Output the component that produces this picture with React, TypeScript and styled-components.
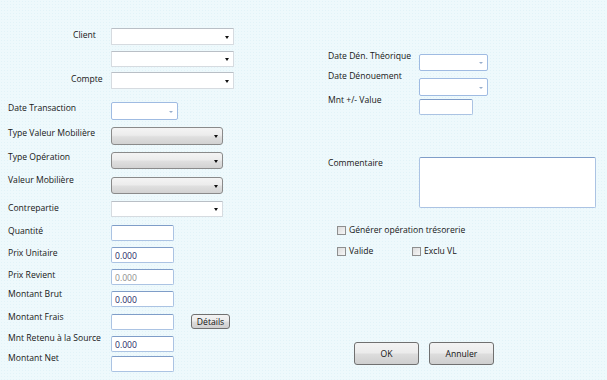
import styled, { createGlobalStyle } from 'styled-components';

const GlobalStyle = createGlobalStyle`
  html, body {
    margin: 0;
    padding: 0;
  }
  body {
    width: 607px;
    height: 380px;
    overflow: hidden;
    font-family: 'Open Sans', 'Liberation Sans', sans-serif;
    font-size: 8.6px;
    color: #161616;
    background-color: #eef9fc;
    background-image: radial-gradient(#e2f3f8 0.7px, transparent 0.8px);
    background-size: 3px 3px;
  }
`;

const Page = styled.div`
  display: flex;
  box-sizing: border-box;
  height: 380px;
  padding: 28px 0 0 8px;
`;

const LeftCol = styled.div`
  display: flex;
  flex-direction: column;
  width: 320px;
`;

const RightCol = styled.div`
  display: flex;
  flex-direction: column;
  margin-top: 26px;
`;

const Row = styled.div<{ $h: number; $lw?: number }>`
  display: grid;
  grid-template-columns: ${(p) => p.$lw ?? 103}px max-content max-content;
  justify-content: start;
  align-items: start;
  height: ${(p) => p.$h}px;
`;

const Label = styled.span<{ $dy?: number; $indent?: number }>`
  margin-top: ${(p) => p.$dy ?? 0}px;
  padding-left: ${(p) => p.$indent ?? 0}px;
  line-height: 11px;
  white-space: nowrap;
`;

const comboSkins = {
  white: `
    background: #ffffff;
    border: 1px solid #d6dbe0;
    border-top-color: #b9bfc6;
    border-radius: 1px;
  `,
  grey: `
    background: linear-gradient(#f4f4f4 0%, #ececec 45%, #dfdfdf 55%, #d2d2d2 100%);
    border: 1px solid #8a8a8a;
    border-radius: 3px;
  `,
  date: `
    background: #ffffff;
    border: 1px solid #9fbbe2;
    border-radius: 2px;
  `,
};

const Combo = styled.div<{ $w: number; $h: number; $kind: keyof typeof comboSkins }>`
  box-sizing: border-box;
  display: flex;
  align-items: center;
  justify-content: flex-end;
  width: ${(p) => p.$w}px;
  height: ${(p) => p.$h}px;
  padding-right: 4px;
  ${(p) => comboSkins[p.$kind]}
`;

const Arrow = styled.span<{ $light?: boolean }>`
  width: 0;
  height: 0;
  margin-top: 1px;
  border-left: ${(p) => (p.$light ? 2 : 2.5)}px solid transparent;
  border-right: ${(p) => (p.$light ? 2 : 2.5)}px solid transparent;
  border-top: ${(p) => (p.$light ? 2 : 3)}px solid ${(p) => (p.$light ? '#97aecb' : '#111')};
`;

const Field = styled.div<{ $w: number; $muted?: boolean }>`
  box-sizing: border-box;
  width: ${(p) => p.$w}px;
  height: 16px;
  padding: 2px 0 0 3px;
  line-height: 12px;
  background: #ffffff;
  border: 1px solid #abc3e3;
  border-top-color: #7f9dc8;
  border-radius: 2px;
  color: ${(p) => (p.$muted ? '#8e8e8e' : '#1f2a66')};
`;

const Note = styled.div`
  box-sizing: border-box;
  width: 177px;
  height: 51px;
  background: #ffffff;
  border: 1px solid #abc3e3;
  border-top-color: #7f9dc8;
  border-radius: 2px;
`;

const Button = styled.button<{ $w: number; $h: number }>`
  box-sizing: border-box;
  width: ${(p) => p.$w}px;
  height: ${(p) => p.$h}px;
  padding: 0;
  font: inherit;
  color: #111;
  border: 1px solid #707070;
  border-radius: 3px;
  background: linear-gradient(#f3f3f3 0%, #ebebeb 48%, #dddddd 52%, #cfcfcf 100%);
`;

const SideButton = styled(Button)`
  margin-left: 17px;
`;

const ChecksRow = styled.div<{ $h: number }>`
  display: grid;
  grid-template-columns: 75px max-content;
  align-items: start;
  height: ${(p) => p.$h}px;
  padding-left: 9px;
`;

const Check = styled.label<{ $wide?: boolean }>`
  display: flex;
  align-items: center;
  gap: 3px;
  line-height: 9px;
  white-space: nowrap;
  grid-column: ${(p) => (p.$wide ? '1 / -1' : 'auto')};
`;

const Box = styled.span`
  flex-shrink: 0;
  box-sizing: border-box;
  width: 9px;
  height: 9px;
  border: 1px solid #8e8f8f;
  background: linear-gradient(135deg, #dcdcdc 0%, #f6f6f6 100%);
`;

const Actions = styled.div`
  display: flex;
  gap: 10px;
  padding-left: 26px;
`;

export default function App() {
  return (
    <>
      <GlobalStyle />
      <Page>
        <LeftCol>
          <Row $h={23}>
            <Label $dy={1.5} $indent={65}>Client</Label>
            <Combo $w={123} $h={17} $kind="white"><Arrow /></Combo>
          </Row>
          <Row $h={21}>
            <span />
            <Combo $w={123} $h={16} $kind="white"><Arrow /></Combo>
          </Row>
          <Row $h={30}>
            <Label $dy={1.5} $indent={63}>Compte</Label>
            <Combo $w={123} $h={17} $kind="white"><Arrow /></Combo>
          </Row>
          <Row $h={25}>
            <Label $dy={0.5}>Date Transaction</Label>
            <Combo $w={67} $h={18} $kind="date"><Arrow $light /></Combo>
          </Row>
          <Row $h={25}>
            <Label $dy={0.5}>Type Valeur Mobilière</Label>
            <Combo $w={112} $h={18} $kind="grey"><Arrow /></Combo>
          </Row>
          <Row $h={25}>
            <Label $dy={-0.5}>Type Opération</Label>
            <Combo $w={112} $h={17} $kind="grey"><Arrow /></Combo>
          </Row>
          <Row $h={24}>
            <Label $dy={-2.5}>Valeur Mobilière</Label>
            <Combo $w={112} $h={17} $kind="grey"><Arrow /></Combo>
          </Row>
          <Row $h={24}>
            <Label $dy={1.5}>Contrepartie</Label>
            <Combo $w={112} $h={16} $kind="white"><Arrow /></Combo>
          </Row>
          <Row $h={22}>
            <Label $dy={0.5}>Quantité</Label>
            <Field $w={63} />
          </Row>
          <Row $h={22}>
            <Label $dy={0.5}>Prix Unitaire</Label>
            <Field $w={63}>0.000</Field>
          </Row>
          <Row $h={22}>
            <Label $dy={0.5}>Prix Revient</Label>
            <Field $w={63} $muted>0.000</Field>
          </Row>
          <Row $h={23}>
            <Label $dy={-2.5}>Montant Brut</Label>
            <Field $w={63}>0.000</Field>
          </Row>
          <Row $h={22}>
            <Label $dy={-2.5}>Montant Frais</Label>
            <Field $w={63} />
            <SideButton $w={39} $h={15}>Détails</SideButton>
          </Row>
          <Row $h={20}>
            <Label $dy={-3.5}>Mnt Retenu à la Source</Label>
            <Field $w={63}>0.000</Field>
          </Row>
          <Row $h={16}>
            <Label $dy={-3}>Montant Net</Label>
            <Field $w={63} />
          </Row>
        </LeftCol>

        <RightCol>
          <Row $h={24} $lw={91}>
            <Label $dy={-3.5}>Date Dén. Théorique</Label>
            <Combo $w={69} $h={17} $kind="date"><Arrow $light /></Combo>
          </Row>
          <Row $h={21} $lw={91}>
            <Label $dy={-7.5}>Date Dénouement</Label>
            <Combo $w={69} $h={18} $kind="date"><Arrow $light /></Combo>
          </Row>
          <Row $h={58} $lw={91}>
            <Label $dy={-4.5}>Mnt +/- Value</Label>
            <Field $w={54} />
          </Row>
          <Row $h={69} $lw={91}>
            <Label $dy={0.5}>Commentaire</Label>
            <Note />
          </Row>
          <ChecksRow $h={21}>
            <Check $wide><Box />Générer opération trésorerie</Check>
          </ChecksRow>
          <ChecksRow $h={95}>
            <Check><Box />Valide</Check>
            <Check><Box />Exclu VL</Check>
          </ChecksRow>
          <Actions>
            <Button $w={65} $h={23}>OK</Button>
            <Button $w={65} $h={23}>Annuler</Button>
          </Actions>
        </RightCol>
      </Page>
    </>
  );
}
